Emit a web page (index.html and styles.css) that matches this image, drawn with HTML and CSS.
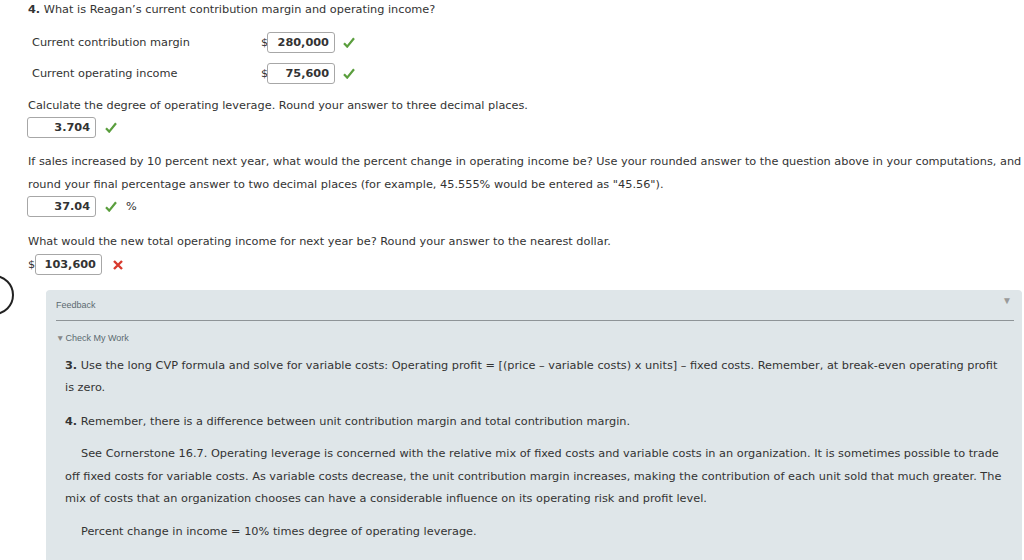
FILE: index.html
```html
<!DOCTYPE html>
<html>
<head>
<meta charset="utf-8">
<link rel="stylesheet" href="styles.css">
</head>
<body>
<div class="page">
  <div class="q">
    <p class="title"><b>4.</b> What is Reagan’s current contribution margin and operating income?</p>
    <div class="rows">
      <div class="row">
        <span class="label">Current contribution margin</span>
        <span class="dollar">$</span><span class="box w68">280,000</span>
        <svg class="check" viewBox="0 0 12 11"><path d="M1 6.2 L4.2 9.6 L11 1.2" fill="none" stroke="#5a9e3d" stroke-width="2.2"/></svg>
      </div>
      <div class="row">
        <span class="label">Current operating income</span>
        <span class="dollar">$</span><span class="box w68">75,600</span>
        <svg class="check" viewBox="0 0 12 11"><path d="M1 6.2 L4.2 9.6 L11 1.2" fill="none" stroke="#5a9e3d" stroke-width="2.2"/></svg>
      </div>
    </div>
    <p class="text t1">Calculate the degree of operating leverage. Round your answer to three decimal places.</p>
    <div class="ans">
      <span class="box w69">3.704</span>
      <svg class="check" viewBox="0 0 12 11"><path d="M1 6.2 L4.2 9.6 L11 1.2" fill="none" stroke="#5a9e3d" stroke-width="2.2"/></svg>
    </div>
    <p class="text t2">If sales increased by 10 percent next year, what would the percent change in operating income be? Use your rounded answer to the question above in your computations, and round your final percentage answer to two decimal places (for example, 45.555% would be entered as "45.56").</p>
    <div class="ans a2">
      <span class="box w69">37.04</span>
      <svg class="check" viewBox="0 0 12 11"><path d="M1 6.2 L4.2 9.6 L11 1.2" fill="none" stroke="#5a9e3d" stroke-width="2.2"/></svg>
      <span class="pct">%</span>
    </div>
    <p class="text t3">What would the new total operating income for next year be? Round your answer to the nearest dollar.</p>
    <div class="ans a3">
      <span class="dollar d2">$</span><span class="box w67">103,600</span>
      <svg class="cross" viewBox="0 0 10 10"><path d="M1 1 L9 9 M9 1 L1 9" fill="none" stroke="#d83a2e" stroke-width="2.4"/></svg>
    </div>
  </div>
  <div class="circle"></div>
  <div class="panel">
    <div class="phead">
      <span class="flabel">Feedback</span>
      <span class="tri">▼</span>
    </div>
    <div class="cmw"><span class="tri2">▼</span><span>Check My Work</span></div>
    <div class="fb">
      <p class="fp"><b>3.</b> Use the long CVP formula and solve for variable costs: Operating profit = [(price – variable costs) x units] – fixed costs. Remember, at break-even operating profit is zero.</p>
      <p class="fp f4"><b>4.</b> Remember, there is a difference between unit contribution margin and total contribution margin.</p>
      <p class="fp f5"><span class="ind"></span>See Cornerstone 16.7. Operating leverage is concerned with the relative mix of fixed costs and variable costs in an organization. It is sometimes possible to trade off fixed costs for variable costs. As variable costs decrease, the unit contribution margin increases, making the contribution of each unit sold that much greater. The mix of costs that an organization chooses can have a considerable influence on its operating risk and profit level.</p>
      <p class="fp f6"><span class="ind"></span>Percent change in income = 10% times degree of operating leverage.</p>
    </div>
  </div>
</div>
</body>
</html>
```

FILE: styles.css
```css
html, body {
  margin: 0;
  padding: 0;
  background: #fff;
  overflow: hidden;
}
body {
  width: 1024px;
  height: 560px;
  font-family: "DejaVu Sans", Verdana, sans-serif;
  font-size: 11.3px;
  color: #333;
}
.page {
  position: relative;
  height: 560px;
}
.q {
  padding-left: 28px;
}
p { margin: 0; }
.title {
  padding-top: 3px;
  line-height: 14px;
}
.rows {
  margin-top: 15px;
  display: flex;
  flex-direction: column;
  gap: 10px;
}
.row {
  display: flex;
  align-items: center;
  height: 21px;
}
.label {
  width: 229px;
  padding-left: 4px;
}
.dollar {
  width: 7px;
}
.row .dollar { width: 6px; }
.box {
  box-sizing: border-box;
  height: 21px;
  border: 1px solid #a7a7a7;
  border-radius: 3px;
  background: #fff;
  font-weight: bold;
  text-align: right;
  padding-right: 5px;
  line-height: 19px;
  color: #333;
  display: inline-block;
}
.w68 { width: 68px; }
.w69 { width: 69px; }
.w67 { width: 67px; }
.check {
  width: 12px;
  height: 11px;
  margin-left: 8px;
}
.cross {
  width: 10px;
  height: 10px;
  margin-left: 11px;
}
.text {
  line-height: 14px;
}
.t1 { margin-top: 15px; }
.t2 { margin-top: 13px; line-height: 22.5px; }
.t3 { margin-top: 18px; }
.ans {
  display: flex;
  align-items: center;
  height: 21px;
  margin-top: 4px;
}
.ans.a2 { margin-top: 0; }
.ans.a3 { margin-top: 5px; }
.ans .box { margin-left: -1px; }
.ans .d2 + .box { margin-left: 0; }
.ans .check { margin-left: 9px; }
.pct {
  margin-left: 9px;
}
.circle {
  position: absolute;
  left: -26px;
  top: 275px;
  width: 40px;
  height: 40px;
  box-sizing: border-box;
  border: 2px solid #222;
  border-radius: 50%;
}
.panel {
  margin-top: 15px;
  margin-left: 46px;
  margin-right: 2px;
  height: 280px;
  background: #dfe6e9;
  border-radius: 4px 4px 0 0;
  padding: 0 8px 0 10px;
  box-shadow: 0 1px 0 #cfd5d8;
}
.phead {
  display: flex;
  justify-content: space-between;
  align-items: center;
  height: 30px;
  border-bottom: 1px solid #8e9497;
  font-family: "Liberation Sans", Arial, sans-serif;
  font-size: 9px;
  color: #5b6a70;
}
.tri {
  font-size: 10px;
  color: #9a9a9a;
  margin-right: 2px;
  margin-top: -9px;
}
.cmw {
  font-family: "Liberation Sans", Arial, sans-serif;
  font-size: 9px;
  color: #5b6a70;
  margin-top: 11px;
  line-height: 12px;
  display: flex;
  align-items: center;
}
.tri2 {
  font-size: 8.5px;
  color: #888;
  margin-left: 0;
  margin-right: 1px;
}
.fb {
  padding-left: 9px;
  padding-right: 9px;
}
.fp {
  line-height: 22px;
  margin-top: 11px;
}
.f4 { margin-top: 12px; }
.f5 { margin-top: 10px; line-height: 22.5px; }
.f6 { margin-top: 10px; }
.ind {
  display: inline-block;
  width: 16px;
}
```
